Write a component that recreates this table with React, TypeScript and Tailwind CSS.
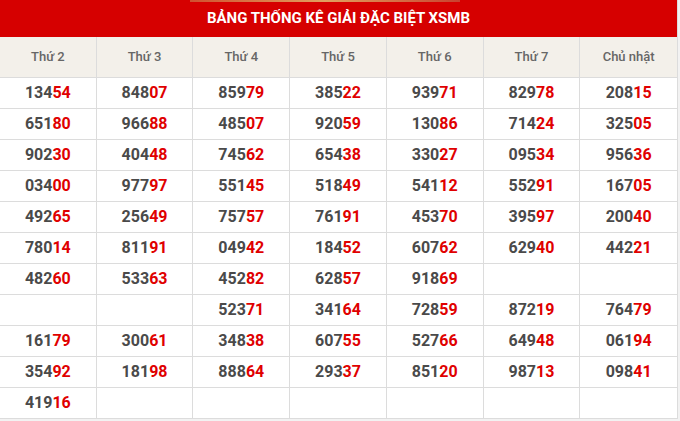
import React from "react";

const days = ["Thứ 2", "Thứ 3", "Thứ 4", "Thứ 5", "Thứ 6", "Thứ 7", "Chủ nhật"];
const rows: string[][] = [
  ["13454", "84807", "85979", "38522", "93971", "82978", "20815"],
  ["65180", "96688", "48507", "92059", "13086", "71424", "32505"],
  ["90230", "40448", "74562", "65438", "33027", "09534", "95636"],
  ["03400", "97797", "55145", "51849", "54112", "55291", "16705"],
  ["49265", "25649", "75757", "76191", "45370", "39597", "20040"],
  ["78014", "81191", "04942", "18452", "60762", "62940", "44221"],
  ["48260", "53363", "45282", "62857", "91869", "", ""],
  ["", "", "52371", "34164", "72859", "87219", "76479"],
  ["16179", "30061", "34838", "60755", "52766", "64948", "06194"],
  ["35492", "18198", "88864", "29337", "85120", "98713", "09841"],
  ["41916", "", "", "", "", "", ""],
];

export default function App() {
  return (
    <div className="w-[680px] h-[421px] bg-[#f2f2f2] overflow-hidden" style={{ fontFamily: "Roboto, 'Liberation Sans', sans-serif" }}>
      <div className="w-[678px] bg-white border-r border-[#dcdcdc]">
        <div className="bg-[#d60000] h-[37px] flex flex-col">
          <div className="h-[2px] flex">
            <div className="w-[190px]" />
            <div className="w-[270px] bg-gradient-to-r from-[#d05030] via-[#e0a060] to-[#c84030]" />
          </div>
          <div className="flex-1 flex items-center justify-center text-white font-bold text-[15px] pb-[2px]">
            BẢNG THỐNG KÊ GIẢI ĐẶC BIỆT XSMB
          </div>
        </div>
        <div className="grid grid-cols-7 bg-[#f3f0ea] border-b border-[#dcdcdc]">
          {days.map((d, i) => (
            <div
              key={d}
              className={`h-[40px] flex items-center justify-center text-[13px] font-medium text-[#666] ${i < 6 ? "border-r border-[#dcdcdc]" : ""}`}
            >
              {d}
            </div>
          ))}
        </div>
        {rows.map((r, ri) => (
          <div key={ri} className="grid grid-cols-7 border-b border-[#dcdcdc]">
            {r.map((n, ci) => (
              <div
                key={ci}
                className={`h-[30px] flex items-center justify-center text-[16px] font-bold text-[#4a4a4a] ${ci < 6 ? "border-r border-[#dcdcdc]" : ""}`}
              >
                {n && (
                  <span>
                    {n.slice(0, 3)}
                    <span className="text-[#e00000]">{n.slice(3)}</span>
                  </span>
                )}
              </div>
            ))}
          </div>
        ))}
      </div>
    </div>
  );
}
